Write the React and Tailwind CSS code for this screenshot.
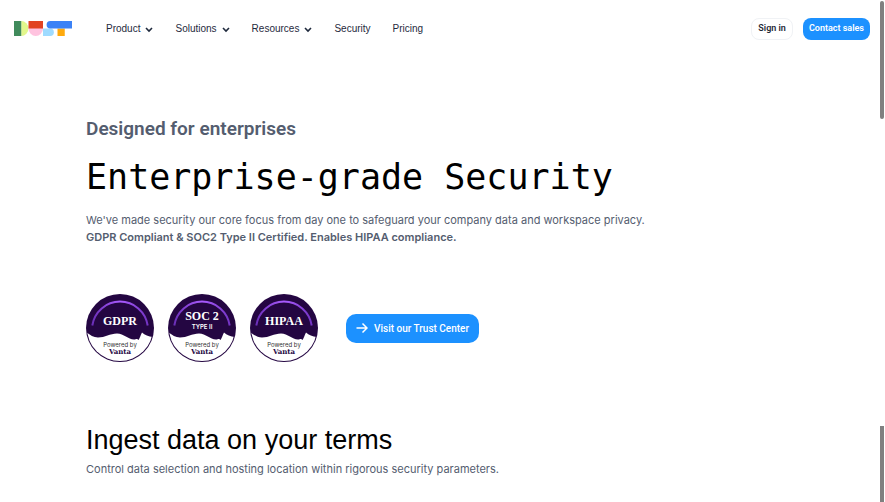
import React from "react";

const menuItems = [
  { label: "Product", hasMenu: true },
  { label: "Solutions", hasMenu: true },
  { label: "Resources", hasMenu: true },
  { label: "Security", hasMenu: false },
  { label: "Pricing", hasMenu: false },
];

const badges = [
  { id: "gdpr", title: "GDPR" },
  { id: "soc2", title: "SOC 2", sub: "TYPE II" },
  { id: "hipaa", title: "HIPAA" },
];

//Logo blocks
const Logo = () => (
  <svg viewBox="0 0 96 24" className="h-[15px] w-[58px]" preserveAspectRatio="none" aria-hidden="true">
    <path d="M12 0a12 12 0 0 1 0 24z" fill="#E2F78C" />
    <rect width="12" height="24" fill="#418B5C" />
    <circle cx="36" cy="12" r="12" fill="#FFC3DF" />
    <rect x="24" width="24" height="12" fill="#E14322" />
    <path d="M48 12h12a6 6 0 0 1 0 12H48z" fill="#9FDBFF" />
    <rect x="72" y="12" width="12" height="12" fill="#FFAA0D" />
    <path d="M60 0h36v12H60a6 6 0 0 1 0-12z" fill="#3B82F6" />
  </svg>
);

const Chevron = () => (
  <svg viewBox="0 0 8 8" className="h-2 w-2" fill="none" stroke="currentColor" strokeWidth="1.6" aria-hidden="true">
    <path d="M1 3 4 6 7 3" />
  </svg>
);

//Round compliance badge
const Badge = ({ id, title, sub }) => (
  <svg viewBox="0 0 68 68" className="size-[68px] shrink-0" role="img" aria-label={title}>
    <defs>
      <linearGradient id={`arc-${id}`} x1="0" x2="1" y1="0" y2="0">
        <stop offset="0" stopColor="#6B2FB8" />
        <stop offset="0.5" stopColor="#AA5CFF" />
        <stop offset="1" stopColor="#7434C4" />
      </linearGradient>
      <clipPath id={`clip-${id}`}>
        <circle cx="34" cy="34" r="33" />
      </clipPath>
    </defs>
    <circle cx="34" cy="34" r="34" fill="#240642" />
    <path
      d="M0 38C3 40 7 43.5 12 43.5C19 43.5 24 39.5 31 39.5C38 39.5 42 45.5 48 45.5C50 45.5 51 44 52.5 46C54 44 54.5 41 56 38.5C59 41 63 43 68 43V68H0z"
      fill="#fff"
      clipPath={`url(#clip-${id})`}
    />
    <path d="M6.3 31.5A28 28 0 0 1 61.7 31.5" fill="none" stroke={`url(#arc-${id})`} strokeWidth="2" />
    <text
      x="34"
      y={sub ? 26 : 31}
      textAnchor="middle"
      className="fill-white font-['Liberation_Serif',serif] text-[12px] font-bold"
    >
      {title}
    </text>
    {sub && (
      <text
        x="34"
        y="35"
        textAnchor="middle"
        className="fill-white font-['Inter',sans-serif] text-[6px] font-semibold"
      >
        {sub}
      </text>
    )}
    <text x="34" y="53" textAnchor="middle" className="fill-[#333] font-['Inter',sans-serif] text-[6px]">
      Powered by
    </text>
    <text
      x="34"
      y="60"
      textAnchor="middle"
      className="fill-[#240642] font-['DejaVu_Serif',serif] text-[7px] font-bold"
    >
      Vanta
    </text>
  </svg>
);

const Header = () => (
  <header className="flex h-[57px] items-center justify-between pl-[14px] pr-[15px]">
    <div className="flex items-center gap-[34px]">
      <a href="#" aria-label="Dust">
        <Logo />
      </a>
      <nav className="flex items-center gap-[22px] text-[10px] text-[#1F2A3D]">
        {menuItems.map((item) =>
          item.hasMenu ? (
            <button key={item.label} type="button" className="flex items-center gap-[5px]">
              {item.label}
              <Chevron />
            </button>
          ) : (
            <a key={item.label} href="#">
              {item.label}
            </a>
          )
        )}
      </nav>
    </div>
    <div className="flex items-center gap-[10px] font-['Roboto',sans-serif] text-[9px] font-semibold">
      <button type="button" className="h-[22px] rounded-lg border border-[#F0F2F5] px-[6px] text-[#1F2937]">
        Sign in
      </button>
      <button type="button" className="h-[22px] rounded-lg bg-[#1C91FF] px-[6px] text-white">
        Contact sales
      </button>
    </div>
  </header>
);

const App = () => {
  return (
    <div className="relative overflow-hidden bg-white font-['Liberation_Sans',sans-serif]">
      <Header />
      <main className="px-[86px] pt-[59px] text-[#545D6F]">
        <section>
          <h2 className="font-['Roboto',sans-serif] text-[19px] font-semibold leading-[26px]">Designed for enterprises</h2>
          <h1 className="mt-3 font-['DejaVu_Sans_Mono',monospace] text-[35px] leading-[46px] text-black">
            Enterprise-grade Security
          </h1>
          <p className="mt-3 font-['Inter',sans-serif] text-[11px] leading-[17px]">
            We've made security our core focus from day one to safeguard your company data and workspace privacy.
            <br />
            <strong className="font-semibold">GDPR Compliant &amp; SOC2 Type II Certified. Enables HIPAA compliance.</strong>
          </p>
          <div className="mt-12 flex items-center gap-7">
            <div className="flex gap-[14px]">
              {badges.map((badge) => (
                <Badge key={badge.id} {...badge} />
              ))}
            </div>
            <button
              type="button"
              className="flex h-[29px] items-center gap-[6px] rounded-[10px] bg-[#1C91FF] px-[10px] font-['Roboto',sans-serif] text-[10px] font-medium text-white"
            >
              <svg viewBox="0 0 12 12" className="size-3" fill="none" stroke="currentColor" strokeWidth="1.5" aria-hidden="true">
                <path d="M0.5 6h10M6.5 1.5 11 6l-4.5 4.5" />
              </svg>
              Visit our Trust Center
            </button>
          </div>
        </section>
        <section className="pt-[60px] pb-6">
          <h2 className="text-[27px] font-medium leading-9 text-black">Ingest data on your terms</h2>
          <p className="mt-[3px] font-['Inter',sans-serif] text-[11px] leading-[17px]">
            Control data selection and hosting location within rigorous security parameters.
          </p>
        </section>
      </main>
      {/* scroll track pieces on the right edge */}
      <div className="absolute right-[1px] top-[1px] h-[118px] w-1 rounded-full bg-[#808080]" />
      <div className="absolute bottom-0 right-[1px] top-[426px] w-1 bg-[#808080]" />
    </div>
  );
};

export default App;
